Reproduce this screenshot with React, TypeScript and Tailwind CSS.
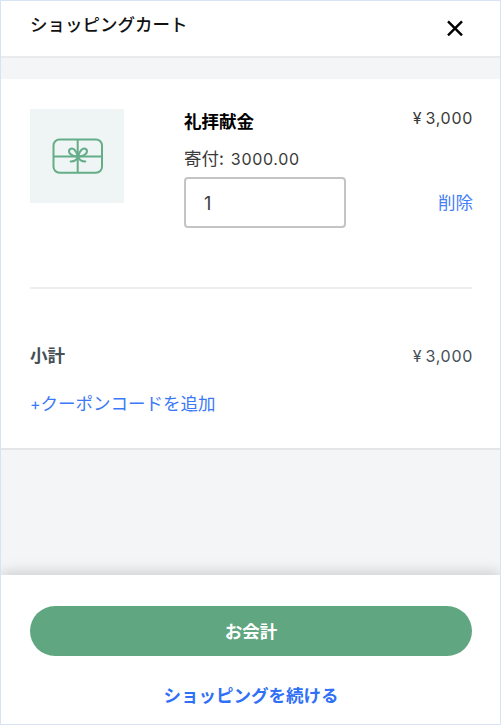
function GiftCardIcon() {
  return (
    <svg
      width="52"
      height="36"
      viewBox="0 0 52 36"
      fill="none"
      stroke="#65ad89"
      strokeWidth="2"
      strokeLinecap="round"
    >
      <rect x="1.5" y="1.5" width="48.5" height="33.2" rx="6" />
      <path d="M25.7 1.5V34.5M2 18.5H50" strokeLinecap="butt" />
      {/* Bow */}
      <path d="M26 18.5C23 18.5 17.2 17 17 13.5C16.9 10.5 20.4 9.6 22.5 11.8C24.3 13.7 25.4 16 26 18.5Z" />
      <path d="M26 18.5C29 18.5 34.8 17 35 13.5C35.1 10.5 31.6 9.6 29.5 11.8C27.7 13.7 26.6 16 26 18.5Z" />
      <path d="M26 19C24.5 22 22 23.6 18.6 23.4M26 19C27.5 22 30 23.6 33.4 23.4" />
    </svg>
  )
}

function Price({ amount }: { amount: number }) {
  return (
    <div className="flex items-center">
      <span className="mr-1 font-['Inter'] text-[16px]">¥</span>
      <span className="-mr-px font-['Inter'] text-[16px] tracking-[0.7px]">
        {amount.toLocaleString("en-US")}
      </span>
    </div>
  )
}

export default function App() {
  return (
    <div className="flex h-[725px] w-[501px] flex-col overflow-hidden border border-[#d8e3f5] bg-[#f4f5f7] font-['Noto_Sans_CJK_JP',sans-serif] text-[17.5px] leading-6 text-[#3a3a3a]">
      {/* Header */}
      <header className="flex h-[57px] shrink-0 justify-between border-b-2 border-[#e9eaeb] bg-white pl-[29px] pr-[37px]">
        <h1 className="pt-[11px] font-medium text-[#111111]">
          ショッピングカート
        </h1>
        <button className="mt-[19px] h-4 w-4" aria-label="閉じる">
          <svg width="16" height="16" viewBox="0 0 16 16" stroke="#000" strokeWidth="2.4">
            <path d="M1 1.4L15 15.4M15 1.4L1 15.4" />
          </svg>
        </button>
      </header>

      {/* Cart */}
      <main className="mt-[21px] h-[371px] shrink-0 border-b-2 border-[#e3e5e7] bg-white pl-[29px] pr-7 pt-[30px]">
        <div className="flex h-[180px] border-b-2 border-[#edeeef]">
          <div className="flex h-[94px] w-[94px] items-center justify-center bg-[#eff5f4] pl-px">
            <GiftCardIcon />
          </div>
          <div className="ml-[60px]">
            <p className="font-bold text-black">礼拝献金</p>
            <p className="mt-[13px]">
              寄付:{" "}
              <span className="ml-[3px] font-['Inter'] text-[16px] tracking-[0.7px]">
                3000.00
              </span>
            </p>
            <input
              className="mt-[6px] block h-[51px] w-[162px] rounded-[4px] border-2 border-[#c4c4c4] px-[18px] pt-0.5 font-['Inter'] text-[18px]"
              defaultValue="1"
            />
          </div>
          <div className="ml-auto flex flex-col items-end">
            <div className="-mt-[3px]">
              <Price amount={3000} />
            </div>
            <a className="-mr-px mt-[60px] text-[#4480f8]">削除</a>
          </div>
        </div>

        <div className="mt-[54px] flex justify-between text-[#454f58]">
          <span className="font-bold">小計</span>
          <div className="pt-px">
            <Price amount={3000} />
          </div>
        </div>
        <a className="mt-[23px] block text-[#3b78f6]">
          <span className="font-['Inter'] text-[16px]">+</span>クーポンコードを追加
        </a>
      </main>

      {/* Checkout */}
      <footer className="mt-auto flex h-[149px] shrink-0 flex-col items-center bg-white pl-[29px] pr-7 pt-[31px] shadow-[0_-2px_14px_rgba(0,0,0,0.18)]">
        <button className="h-[50px] w-full shrink-0 rounded-full bg-[#5fa681] font-bold text-white">
          お会計
        </button>
        <a className="mt-[27px] font-bold text-[#2f70f7]">ショッピングを続ける</a>
      </footer>
    </div>
  )
}
